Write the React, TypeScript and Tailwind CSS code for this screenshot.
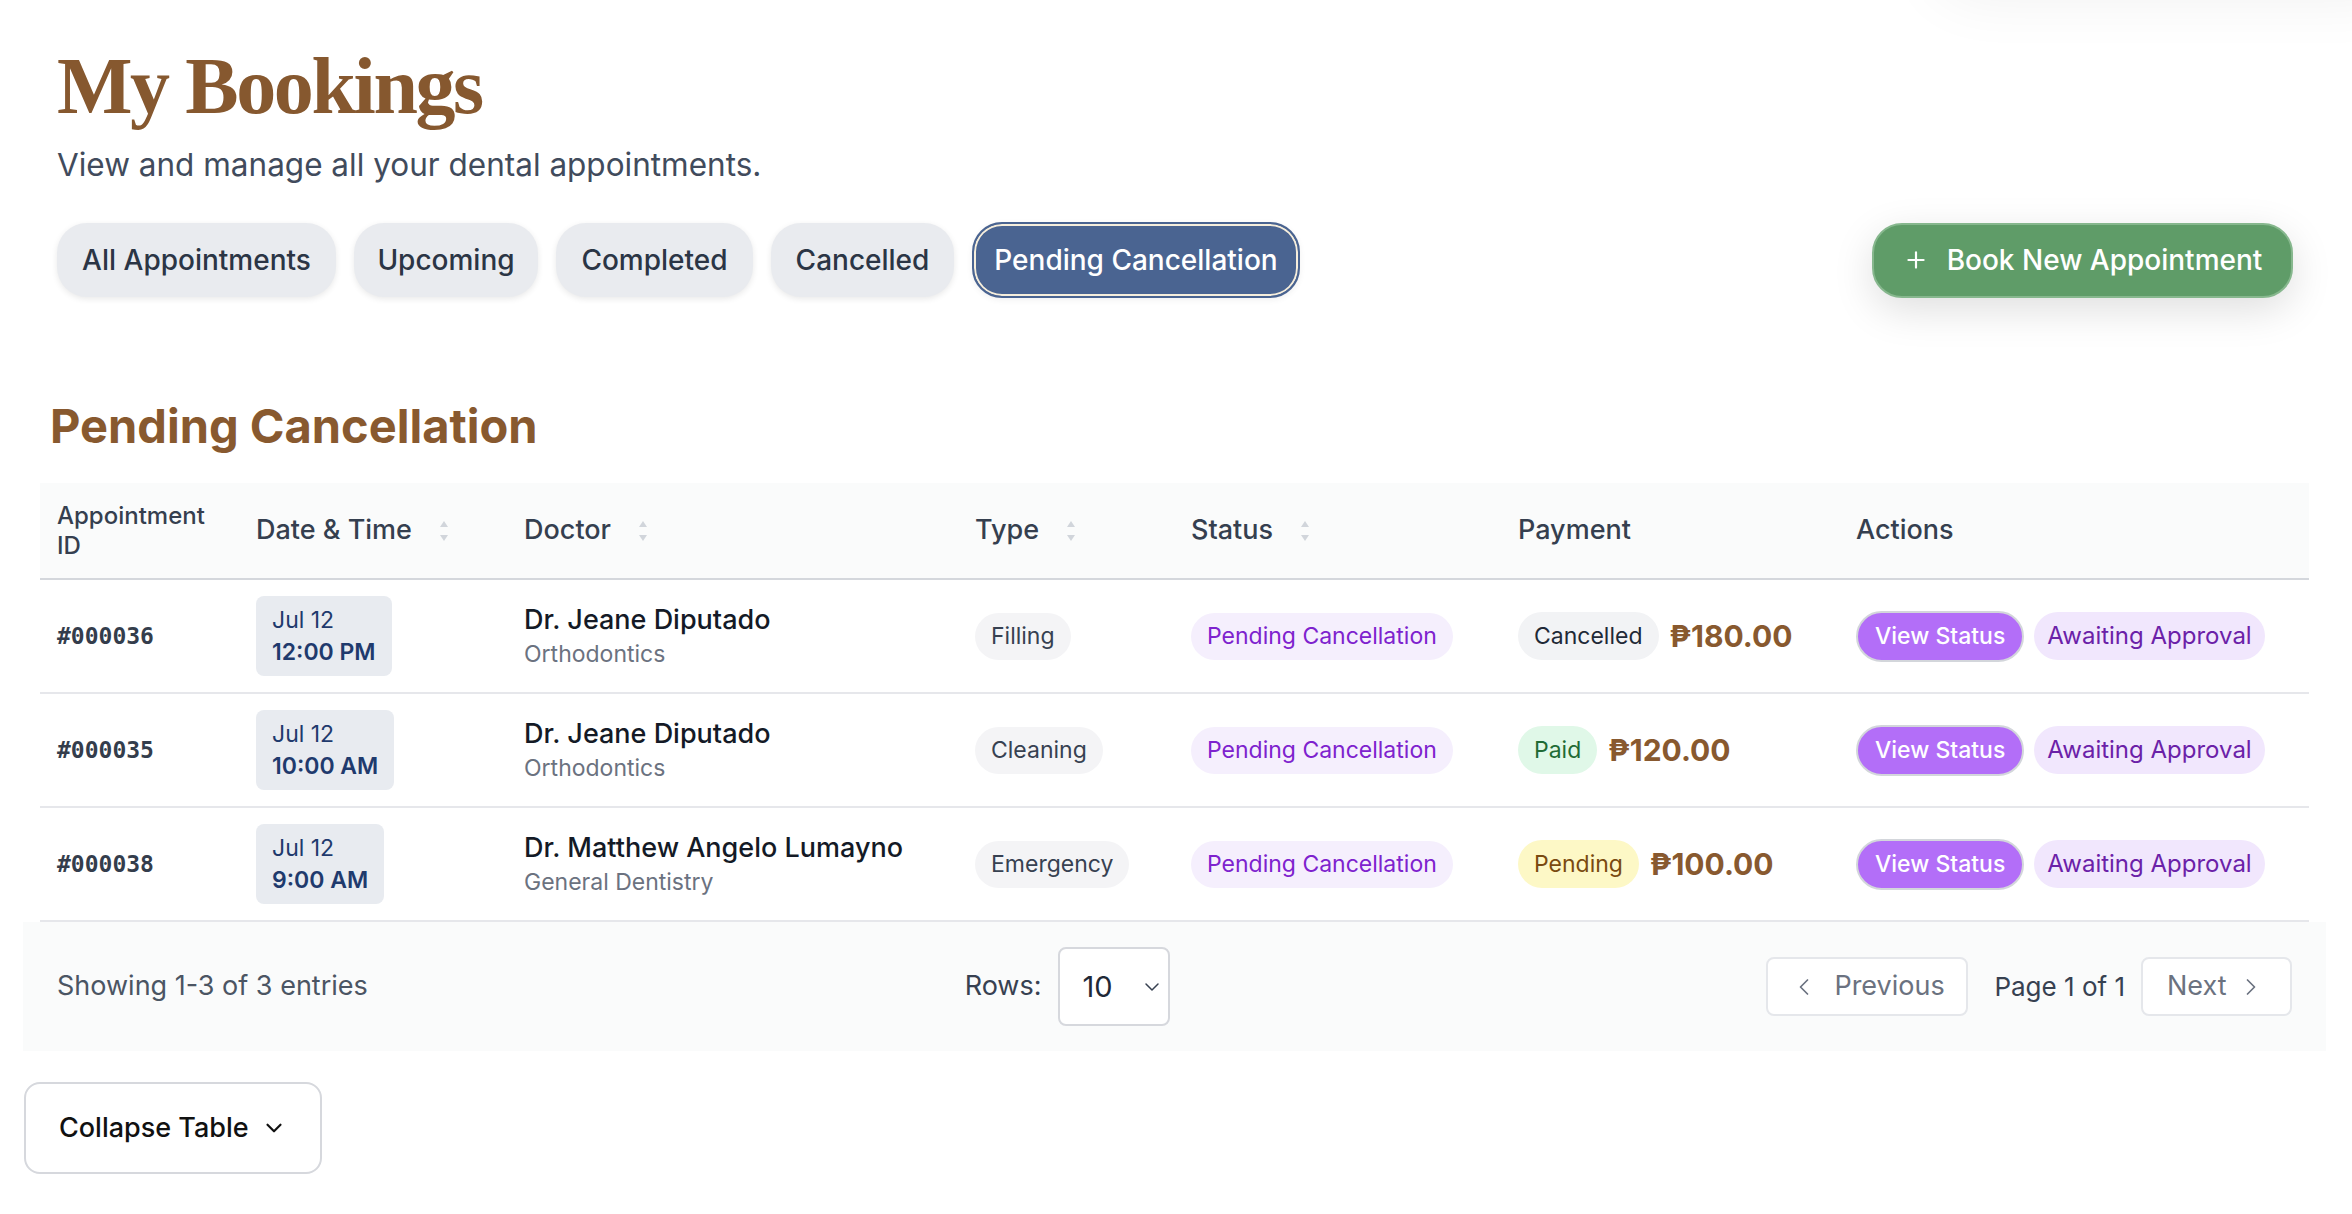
import React from 'react';
import { ChevronDown, ChevronLeft, ChevronRight, Plus } from 'lucide-react';

type Booking = {
  id: string;
  date: string;
  time: string;
  doctor: string;
  specialty: string;
  type: string;
  payment: string;
  paymentClass: string;
  amount: string;
};

const bookings: Booking[] = [
  {
    id: '#000036',
    date: 'Jul 12',
    time: '12:00 PM',
    doctor: 'Dr. Jeane Diputado',
    specialty: 'Orthodontics',
    type: 'Filling',
    payment: 'Cancelled',
    paymentClass: 'bg-[#f2f3f5] text-[#1f2937]',
    amount: '₱180.00',
  },
  {
    id: '#000035',
    date: 'Jul 12',
    time: '10:00 AM',
    doctor: 'Dr. Jeane Diputado',
    specialty: 'Orthodontics',
    type: 'Cleaning',
    payment: 'Paid',
    paymentClass: 'bg-[#e0f8e8] text-[#1f6b35]',
    amount: '₱120.00',
  },
  {
    id: '#000038',
    date: 'Jul 12',
    time: '9:00 AM',
    doctor: 'Dr. Matthew Angelo Lumayno',
    specialty: 'General Dentistry',
    type: 'Emergency',
    payment: 'Pending',
    paymentClass: 'bg-[#fdf8c6] text-[#7a4a10]',
    amount: '₱100.00',
  },
];

const tabs = [
  { label: 'All Appointments', width: 'w-[279px]' },
  { label: 'Upcoming', width: 'w-[184px]' },
  { label: 'Completed', width: 'w-[197px]' },
  { label: 'Cancelled', width: 'w-[183px]' },
  { label: 'Pending Cancellation', width: 'w-[328px]' },
];

function SortIcon() {
  return (
    <svg width="8" height="20" viewBox="0 0 8 20" className="ml-[28px] shrink-0">
      <path d="M4 0 L8 6 L0 6 Z" fill="#d1d5db" />
      <path d="M0 14 L8 14 L4 20 Z" fill="#d1d5db" />
    </svg>
  );
}

function App() {
  return (
    <div className="relative min-h-screen bg-white font-[family-name:Inter,sans-serif] overflow-hidden">
      {/* soft shadow of an element just above the viewport */}
      <div className="absolute -top-[90px] right-[-60px] w-[480px] h-[90px] rounded-full bg-white shadow-[0_0_60px_rgba(0,0,0,0.06)]" />

      <div className="relative pl-[23px] pr-[26px] pb-10">
        {/* Page header */}
        <div className="pl-[34px] pr-[33px] pt-[46px]">
          <h1 className="font-[family-name:'Liberation_Serif',serif] font-bold text-[80px] leading-[80px] tracking-[-0.03em] text-[#86582f]">
            My Bookings
          </h1>
          <p className="mt-[21px] text-[31.5px] leading-[36px] text-[#414b5c]">
            View and manage all your dental appointments.
          </p>

          <div className="mt-[39px] flex items-center justify-between">
            <div className="flex items-center gap-[18px]">
              {tabs.map((t) => {
                const active = t.label === 'Pending Cancellation';
                return (
                  <button
                    key={t.label}
                    className={
                      active
                        ? `${t.width} h-[76px] rounded-[30px] border-2 border-[#4a6491] bg-[#4a6491] text-white text-[28px] font-medium shadow-[inset_0_0_0_2px_#f6eedc,0_2px_6px_rgba(0,0,0,0.06)]`
                        : `${t.width} h-[74px] rounded-[30px] bg-[#e9ebef] text-[#2b3545] text-[28px] font-medium shadow-[0_2px_6px_rgba(0,0,0,0.09)]`
                    }
                  >
                    {t.label}
                  </button>
                );
              })}
            </div>
            <button className="h-[75px] w-[421px] flex items-center justify-center gap-[18px] rounded-[30px] border-2 border-[#86b78d] bg-[#5f9c68] text-white text-[28px] font-medium shadow-[0_12px_40px_rgba(0,0,0,0.13)]">
              <Plus size={26} strokeWidth={2} />
              Book New Appointment
            </button>
          </div>
        </div>

        {/* Section heading */}
        <h2 className="mt-[100px] pl-[27px] text-[47px] leading-[56px] font-bold text-[#88592f]">
          Pending Cancellation
        </h2>

        {/* Table */}
        <div className="mt-[29px] px-[17px]">
          <table className="w-full table-fixed border-collapse">
            <colgroup>
              <col className="w-[199px]" />
              <col className="w-[268px]" />
              <col className="w-[451px]" />
              <col className="w-[216px]" />
              <col className="w-[327px]" />
              <col className="w-[338px]" />
              <col />
            </colgroup>
            <thead>
              <tr className="bg-[#fafbfb] border-b-2 border-[#d4d7dc] text-[#353f4f] text-[27px] font-medium">
                <th className="h-[96px] px-[17px] text-left align-middle font-medium text-[24px] leading-[30px]">Appointment ID</th>
                <th className="px-[17px] text-left font-medium">
                  <div className="flex items-center">Date &amp; Time<SortIcon /></div>
                </th>
                <th className="px-[17px] text-left font-medium">
                  <div className="flex items-center">Doctor<SortIcon /></div>
                </th>
                <th className="px-[17px] text-left font-medium">
                  <div className="flex items-center">Type<SortIcon /></div>
                </th>
                <th className="px-[17px] text-left font-medium">
                  <div className="flex items-center">Status<SortIcon /></div>
                </th>
                <th className="px-[17px] text-left font-medium">Payment</th>
                <th className="px-[17px] text-left font-medium">Actions</th>
              </tr>
            </thead>
            <tbody>
              {bookings.map((b) => (
                <tr key={b.id} className="border-b-2 border-[#e6e7eb]">
                  <td className="h-[114px] px-[17px] align-middle">
                    <span className="font-[family-name:'DejaVu_Sans_Mono',monospace] font-bold text-[23px] text-[#343d4c]">
                      {b.id}
                    </span>
                  </td>
                  <td className="px-[17px] align-middle">
                    <div className="inline-flex flex-col rounded-lg bg-[#e8ebf0] px-[16px] py-[8px] text-[23px] leading-[32px] text-[#1f3a6d]">
                      <span>{b.date}</span>
                      <span className="font-semibold">{b.time}</span>
                    </div>
                  </td>
                  <td className="px-[17px] align-middle">
                    <div className="text-[27px] leading-[35px] font-medium text-[#141a26]">{b.doctor}</div>
                    <div className="text-[23px] leading-[34px] text-[#6b7280]">{b.specialty}</div>
                  </td>
                  <td className="px-[17px] align-middle">
                    <span className="inline-flex h-[47px] items-center rounded-full bg-[#f4f4f6] px-[16px] text-[23px] text-[#374151]">
                      {b.type}
                    </span>
                  </td>
                  <td className="px-[17px] align-middle">
                    <span className="inline-flex h-[47px] items-center rounded-full bg-[#f5effd] px-[16px] text-[23px] text-[#7e22ce]">
                      Pending Cancellation
                    </span>
                  </td>
                  <td className="px-[17px] align-middle">
                    <div className="flex items-center gap-[11px]">
                      <span className={`inline-flex h-[48px] items-center rounded-full px-[16px] text-[23px] ${b.paymentClass}`}>
                        {b.payment}
                      </span>
                      <span className="text-[30px] font-bold text-[#88592f]">{b.amount}</span>
                    </div>
                  </td>
                  <td className="px-[17px] align-middle">
                    <div className="flex items-center gap-[10px]">
                      <button className="h-[51px] px-[17px] rounded-full border-2 border-[#d3d6db] bg-[#b36ef8] text-[23px] font-medium text-white">
                        View Status
                      </button>
                      <span className="inline-flex h-[48px] items-center rounded-full bg-[#f1e7fd] px-[13px] text-[24px] text-[#6b21a8]">
                        Awaiting Approval
                      </span>
                    </div>
                  </td>
                </tr>
              ))}
            </tbody>
          </table>
        </div>

        {/* Footer */}
        <div className="flex h-[129px] items-center justify-between bg-[#fafbfb] px-[34px] text-[27px]">
          <span className="text-[#4b5563]">Showing 1-3 of 3 entries</span>
          <div className="flex items-center gap-[16px]">
            <span className="text-[#374151]">Rows:</span>
            <div className="flex h-[79px] w-[112px] items-center justify-between rounded-lg border-2 border-[#d6d8dd] bg-white pl-[23px] pr-[4px]">
              <span className="text-[29px] text-[#1f2937]">10</span>
              <ChevronDown size={24} strokeWidth={1.5} className="text-[#374151]" />
            </div>
          </div>
          <div className="flex items-center text-[26px]">
            <button className="flex h-[59px] w-[202px] items-center gap-[16px] rounded-lg border-2 border-[#e5e7eb] bg-white pl-[22px] text-[27px] text-[#6b7280]">
              <ChevronLeft size={28} strokeWidth={1.5} />
              Previous
            </button>
            <span className="ml-[26px] mr-[16px] text-[#374151]">Page 1 of 1</span>
            <button className="flex h-[59px] w-[151px] items-center gap-[10px] rounded-lg border-2 border-[#e5e7eb] bg-white pl-[24px] text-[27px] text-[#6b7280]">
              Next
              <ChevronRight size={28} strokeWidth={1.5} />
            </button>
          </div>
        </div>

        {/* Collapse */}
        <button className="mt-[31px] ml-[1px] flex h-[92px] w-[298px] items-center gap-[12px] rounded-2xl border-2 border-[#d6d8dd] bg-white pl-[33px] text-[27px] font-medium text-[#111111]">
          Collapse Table
          <ChevronDown size={26} strokeWidth={2} />
        </button>
      </div>
    </div>
  );
}

export default App;
